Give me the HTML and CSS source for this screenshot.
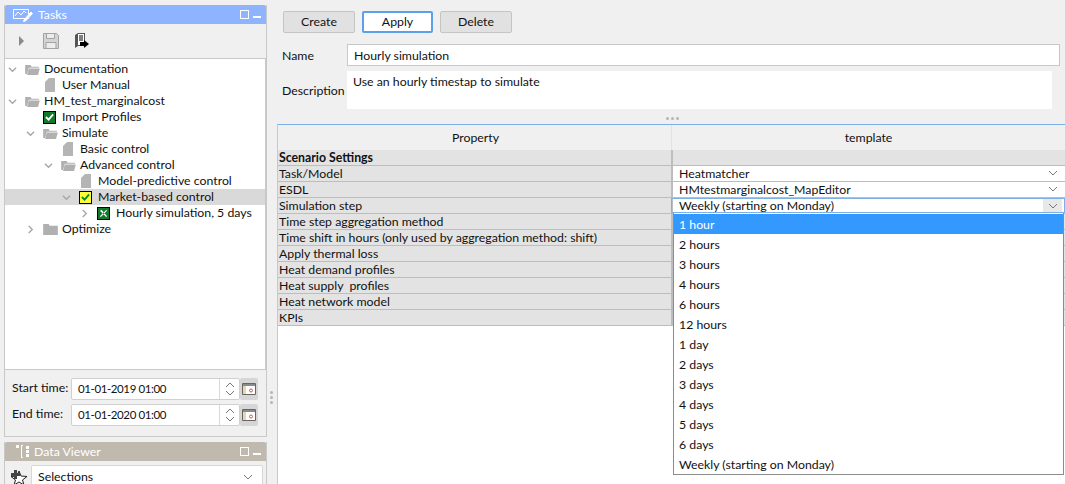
FILE: index.html
```html
<!DOCTYPE html>
<html lang="en">

<head>
    <meta charset="UTF-8">
    <title>Tasks</title>
    <link rel="stylesheet" href="styles.css">
</head>

<body>
    <div class="sidebar">
        <!-- Tasks panel -->
        <section class="panel tasks-panel">
            <div class="panel-title title-active">
                <svg class="title-icon" width="20" height="14" viewBox="0 0 20 14" fill="none" stroke="#fff" stroke-width="1">
                    <path d="M.5 1.500h15v9H.5zM2 8l3-4 3 3 3-4 2 2" />
                    <path d="M11 12l7-8 1.500 1.500-7 7.500-2 .5z" fill="#fff" />
                </svg>
                <span>Tasks</span>
                <span class="win-buttons"><i class="win-max"></i><i class="win-min"></i></span>
            </div>
            <div class="toolbar">
                <svg width="6" height="10" viewBox="0 0 6 10"><path d="M0 0l5 5-5 5z" fill="#8a8a8a" /></svg>
                <svg width="16" height="16" viewBox="0 0 16 16" fill="#d4d4d4" stroke="#a3a3a3"><path d="M.5.5h13l2 2v13H.5z" /><path d="M3.500.5h8v5h-8zM3 9.500h10v6H3z" fill="#ececec" /></svg>
                <svg width="16" height="16" viewBox="0 0 16 16"><path d="M1 2l3-2h7v13H4l-3 2z" fill="#555" /><path d="M4 1h6v11H4z" fill="#fff" /><path d="M5 3h4M5 5h4M5 7h4" stroke="#000" /><path d="M6 9h4V7l5 4-5 4v-2H6z" fill="#000" /></svg>
            </div>
            <ul class="tree">
                <li class="tree-row level-0"><svg class="chevron" viewBox="0 0 10 6"><path d="M1 1l4 4 4-4" /></svg><svg class="folder" viewBox="0 0 16 12"><path d="M0 1h6l1 2h8v1H4L2 11H0z" /><path d="M4 5h12l-2 7H2z" /></svg>Documentation</li>
                <li class="tree-row level-1"><span class="chevron"></span><svg class="doc" viewBox="0 0 10 14"><path d="M4 0h6v14H0V4z" /></svg>User Manual</li>
                <li class="tree-row level-0"><svg class="chevron" viewBox="0 0 10 6"><path d="M1 1l4 4 4-4" /></svg><svg class="folder" viewBox="0 0 16 12"><path d="M0 1h6l1 2h8v1H4L2 11H0z" /><path d="M4 5h12l-2 7H2z" /></svg>HM_test_marginalcost</li>
                <li class="tree-row level-1"><span class="chevron"></span><span class="status status-done"><svg viewBox="0 0 10 8"><path d="M1 4l3 3 5-6" /></svg></span>Import Profiles</li>
                <li class="tree-row level-1"><svg class="chevron" viewBox="0 0 10 6"><path d="M1 1l4 4 4-4" /></svg><svg class="folder" viewBox="0 0 16 12"><path d="M0 1h6l1 2h8v1H4L2 11H0z" /><path d="M4 5h12l-2 7H2z" /></svg>Simulate</li>
                <li class="tree-row level-2"><span class="chevron"></span><svg class="doc" viewBox="0 0 10 14"><path d="M4 0h6v14H0V4z" /></svg>Basic control</li>
                <li class="tree-row level-2"><svg class="chevron" viewBox="0 0 10 6"><path d="M1 1l4 4 4-4" /></svg><svg class="folder" viewBox="0 0 16 12"><path d="M0 1h6l1 2h8v1H4L2 11H0z" /><path d="M4 5h12l-2 7H2z" /></svg>Advanced control</li>
                <li class="tree-row level-3"><span class="chevron"></span><svg class="doc" viewBox="0 0 10 14"><path d="M4 0h6v14H0V4z" /></svg>Model-predictive control</li>
                <li class="tree-row level-3 selected"><svg class="chevron" viewBox="0 0 10 6"><path d="M1 1l4 4 4-4" /></svg><span class="status status-active"><svg viewBox="0 0 10 8"><path d="M1 4l3 3 5-6" /></svg></span>Market-based control</li>
                <li class="tree-row level-4"><svg class="chevron" viewBox="0 0 10 10"><path d="M3 1l4 4-4 4" /></svg><span class="status status-tool"><svg viewBox="0 0 10 10"><path d="M1 2l2-1 6 7-1 1zM9 2L8 1 1 8l1 1z" /></svg></span>Hourly simulation, 5 days</li>
                <li class="tree-row level-1"><svg class="chevron" viewBox="0 0 10 10"><path d="M3 1l4 4-4 4" /></svg><svg class="folder" viewBox="0 0 16 12"><path d="M0 0h6l1 2h9v10H0z" /></svg>Optimize</li>
            </ul>
            <div class="time-fields">
                <div class="time-row">
                    <label>Start time:</label>
                    <div class="time-input">
                        <span>01-01-2019 01:00</span>
                        <svg class="spinner" width="12" height="14" viewBox="0 0 12 14"><path d="M2 5l4-4 4 4M2 9l4 4 4-4" /></svg>
                    </div>
                    <div class="calendar"><svg width="14" height="12" viewBox="0 0 14 12"><path d="M.5.5h13v11H.5z" fill="#fff" stroke="#666" /><path d="M1 1h12v2H1z" fill="#8a8a8a" /><path d="M1 3h3v8H1z" fill="#e6d9a8" /><circle cx="9" cy="7.500" r="1.500" fill="none" stroke="#d9534f" /></svg></div>
                </div>
                <div class="time-row">
                    <label>End time:</label>
                    <div class="time-input">
                        <span>01-01-2020 01:00</span>
                        <svg class="spinner" width="12" height="14" viewBox="0 0 12 14"><path d="M2 5l4-4 4 4M2 9l4 4 4-4" /></svg>
                    </div>
                    <div class="calendar"><svg width="14" height="12" viewBox="0 0 14 12"><path d="M.5.5h13v11H.5z" fill="#fff" stroke="#666" /><path d="M1 1h12v2H1z" fill="#8a8a8a" /><path d="M1 3h3v8H1z" fill="#e6d9a8" /><circle cx="9" cy="7.500" r="1.500" fill="none" stroke="#d9534f" /></svg></div>
                </div>
            </div>
        </section>

        <!-- Data viewer panel -->
        <section class="panel viewer-panel">
            <div class="panel-title title-idle">
                <svg class="title-icon" width="14" height="13" viewBox="0 0 14 13" fill="#fff"><path d="M0 0h3v3H0zM5 0h2v1H6v11h1v1H5zM10 1h3v3h-3zM10 5h3v3h-3zM10 9h3v3h-3z" /></svg>
                <span>Data Viewer</span>
                <span class="win-buttons"><i class="win-max"></i><i class="win-min"></i></span>
            </div>
            <div class="viewer-bar">
                <svg width="18" height="18" viewBox="0 0 18 18"><path d="M9 3l2 5 6 .5-4.500 3.500 1.500 5-5-3-5 3 1.500-5L1 8.500 7 8z" fill="#fff" stroke="#222" /><path d="M1 5h3V2h3v3h3v3H7v3H4V8H1z" fill="#444" /></svg>
                <div class="viewer-select">Selections
                    <svg class="caret" viewBox="0 0 10 6"><path d="M1 1l4 4 4-4" /></svg>
                </div>
            </div>
        </section>
    </div>

    <div class="sash"><i></i><i></i><i></i></div>

    <main class="content">
        <div class="actions">
            <button type="button">Create</button>
            <button type="button" class="focused">Apply</button>
            <button type="button">Delete</button>
        </div>

        <div class="form-line name-line">
            <label>Name</label>
            <div class="name-input">Hourly simulation</div>
        </div>
        <div class="form-line desc-line">
            <label>Description</label>
            <div class="desc-input">Use an hourly timestap to simulate</div>
        </div>

        <div class="hsash"><i></i><i></i><i></i></div>

        <div class="property-table">
            <div class="table-head">
                <div class="col-name">Property</div>
                <div class="col-value">template</div>
            </div>
            <div class="row row-group"><div class="col-name">Scenario Settings</div><div class="col-value"></div></div>
            <div class="row"><div class="col-name">Task/Model</div><div class="col-value cell-select">Heatmatcher<svg class="caret" viewBox="0 0 10 6"><path d="M1 1l4 4 4-4" /></svg></div></div>
            <div class="row"><div class="col-name">ESDL</div><div class="col-value cell-select">HMtestmarginalcost_MapEditor<svg class="caret" viewBox="0 0 10 6"><path d="M1 1l4 4 4-4" /></svg></div></div>
            <div class="row"><div class="col-name">Simulation step</div><div class="col-value cell-select cell-open">Weekly (starting on Monday)<span class="caret-box"><svg class="caret" viewBox="0 0 10 6"><path d="M1 1l4 4 4-4" /></svg></span></div></div>
            <div class="row"><div class="col-name">Time step aggregation method</div><div class="col-value"></div></div>
            <div class="row"><div class="col-name">Time shift in hours (only used by aggregation method: shift)</div><div class="col-value"></div></div>
            <div class="row"><div class="col-name">Apply thermal loss</div><div class="col-value"></div></div>
            <div class="row"><div class="col-name">Heat demand profiles</div><div class="col-value"></div></div>
            <div class="row"><div class="col-name">Heat supply&nbsp; profiles</div><div class="col-value"></div></div>
            <div class="row"><div class="col-name">Heat network model</div><div class="col-value"></div></div>
            <div class="row"><div class="col-name">KPIs</div><div class="col-value"></div></div>

            <ul class="dropdown">
                <li class="highlight">1 hour</li>
                <li>2 hours</li>
                <li>3 hours</li>
                <li>4 hours</li>
                <li>6 hours</li>
                <li>12 hours</li>
                <li>1 day</li>
                <li>2 days</li>
                <li>3 days</li>
                <li>4 days</li>
                <li>5 days</li>
                <li>6 days</li>
                <li>Weekly (starting on Monday)</li>
            </ul>
        </div>
    </main>
</body>

</html>
```

FILE: styles.css
```css
* {
    box-sizing: border-box;
}

html, body {
    height: 100%;
}

body {
    margin: 0;
    background-color: #f0f0f0;
    color: #111;
    font-family: Lato, "Noto Sans", sans-serif;
    font-size: 12.300px;
    line-height: 16px;
    display: flex;
    height: 484px;
    overflow: hidden;
}

/* left column */
.sidebar {
    width: 263px;
    margin-left: 4px;
    padding-top: 5px;
    flex: none;
}

.panel {
    border-left: 1px solid #c8c8c8;
    border-right: 1px solid #c8c8c8;
}

.tasks-panel {
    height: 432px;
    border-bottom: 1px solid #c8c8c8;
    display: flex;
    flex-direction: column;
}

.viewer-panel {
    margin-top: 5px;
}

.panel-title {
    display: flex;
    align-items: center;
    color: #fff;
    border-radius: 2px 2px 0 0;
    padding-left: 8px;
    flex: none;
}

.title-active {
    height: 19px;
    background-color: #8fb4ff;
}

.title-idle {
    height: 19px;
    background-color: #bfb9ae;
    padding-left: 11px;
}

.title-icon {
    margin-right: 5px;
}

.title-idle .title-icon {
    margin-right: 4px;
}

.win-buttons {
    margin-left: auto;
    display: flex;
    align-items: center;
    gap: 4px;
    padding-right: 5px;
}

.win-max {
    width: 9px;
    height: 9px;
    border: 1px solid #fff;
}

.win-min {
    width: 8px;
    height: 2px;
    margin-top: 5px;
    background-color: #fff;
}

.toolbar {
    height: 34px;
    display: flex;
    align-items: center;
    gap: 19px;
    padding-left: 14px;
    flex: none;
}

.toolbar svg:first-child {
    margin-right: -1px;
}

.toolbar svg:last-child {
    margin-left: -4px;
}

.tree {
    list-style: none;
    margin: 0;
    padding: 2px 0 0;
    height: 312px;
    background-color: #fff;
    border: 1px solid #c8c8c8;
    border-width: 1px 1px 1px 0;
    flex: none;
}

.tree-row {
    height: 16px;
    display: flex;
    align-items: center;
    white-space: nowrap;
}

.level-0 { padding-left: 3px; }
.level-1 { padding-left: 21px; }
.level-2 { padding-left: 39px; }
.level-3 { padding-left: 57px; }
.level-4 { padding-left: 75px; }

.selected {
    background-color: #d9d9d9;
}

.chevron {
    width: 9px;
    height: 9px;
    flex: none;
    margin-right: 8px;
    fill: none;
    stroke: #a6a6a6;
    stroke-width: 1.500;
}

.folder {
    width: 15px;
    height: 11px;
    flex: none;
    margin-right: 4px;
    fill: #b0b0b0;
}

.doc {
    width: 10px;
    height: 14px;
    flex: none;
    margin: 0 7px 0 2px;
    fill: #b5b5b5;
}

.status {
    width: 13px;
    height: 13px;
    flex: none;
    margin-right: 6px;
    border: 1px solid #000;
    display: flex;
    align-items: center;
    justify-content: center;
}

.status svg {
    width: 9px;
    height: 8px;
    fill: none;
    stroke-width: 2;
}

.status-done {
    background-color: #0f7a2a;
    stroke: #fff;
}

.status-active {
    background-color: #ffff33;
    stroke: #0f8a2a;
}

.status-tool {
    background-color: #0f7a2a;
}

.status-tool svg {
    fill: #fff;
    height: 9px;
    stroke-width: 0;
}

.time-fields {
    padding: 8px 0 0 7px;
}

.time-row {
    display: flex;
    align-items: center;
    height: 22px;
    margin-bottom: 4px;
}

.time-row label {
    width: 59px;
    flex: none;
    margin-top: -2px;
}

.time-input {
    width: 169px;
    height: 22px;
    background-color: #fff;
    border: 1px solid #d0d0d0;
    border-radius: 2px;
    display: flex;
    align-items: center;
    padding-left: 6px;
    position: relative;
}

.time-input span {
    flex: 1;
    font-size: 11.500px;
    letter-spacing: -0.400px;
}

.spinner {
    fill: none;
    stroke: #777;
    margin-right: 3px;
    margin-left: 5px;
}

.time-input::after {
    content: "";
    position: absolute;
    right: 19px;
    top: 0;
    bottom: 0;
    border-left: 1px solid #d8d8d8;
}

.calendar {
    width: 18px;
    height: 22px;
    background-color: #d6d6d6;
    border-radius: 2px;
    display: flex;
    align-items: center;
    justify-content: center;
    flex: none;
}

.viewer-bar {
    display: flex;
    align-items: center;
    height: 23px;
    margin-top: 4px;
    padding: 0 3px 0 5px;
    gap: 3px;
}

.viewer-select {
    flex: 1;
    height: 23px;
    background-color: #fff;
    border: 1px solid #d8d8d8;
    border-radius: 2px 2px 0 0;
    padding: 3px 6px 0;
    display: flex;
    justify-content: space-between;
}

.caret {
    width: 10px;
    height: 6px;
    flex: none;
    fill: none;
    stroke: #777;
    margin-top: 5px;
    margin-right: 3px;
}

/* sash between the columns */
.sash {
    width: 6px;
    flex: none;
    display: flex;
    flex-direction: column;
    align-items: flex-start;
    justify-content: flex-start;
    gap: 2px;
    padding: 391px 0 0 3px;
}

.sash i, .hsash i {
    width: 3px;
    height: 3px;
    border-radius: 50%;
    background-color: #b5b5b5;
}

/* right column */
.content {
    flex: 1;
    min-width: 0;
    display: flex;
    flex-direction: column;
}

.actions {
    display: flex;
    gap: 7px;
    margin: 11px 0 0 10px;
    flex: none;
}

button {
    width: 72px;
    height: 22px;
    padding: 0;
    font: inherit;
    color: inherit;
    background-color: #e1e1e1;
    border: 1px solid #c4c4c4;
    border-radius: 2px;
}

button.focused {
    width: 71px;
    background-color: #fff;
    border: 2px solid #5aa0ea;
}

.form-line {
    display: flex;
    flex: none;
}

.form-line label {
    width: 74px;
    flex: none;
    padding: 1px 0 0 9px;
}

.name-line {
    margin-top: 11px;
    height: 22px;
    align-items: center;
}

.name-input {
    width: 713px;
    height: 22px;
    background-color: #fff;
    border: 1px solid #c8c8c8;
    padding: 3px 6px;
}

.desc-line {
    margin-top: 5px;
    height: 38px;
    align-items: center;
}

.desc-input {
    width: 705px;
    height: 38px;
    background-color: #fff;
    padding: 3px 6px;
}

.hsash {
    height: 15px;
    display: flex;
    justify-content: center;
    align-items: center;
    gap: 2px;
    padding: 3px 0 0 6px;
    flex: none;
}

.property-table {
    flex: 1;
    margin-left: 4px;
    background-color: #fff;
    border: 1px solid #c8c8c8;
    border-top-color: #7fb0e4;
    border-right: 0;
    border-bottom: 0;
    position: relative;
}

.table-head {
    display: flex;
    height: 25px;
    background-color: #f0f0f0;
    text-align: center;
    line-height: 25px;
}

.table-head .col-value {
    border-left: 1px solid #e3e3e3;
}

.row {
    display: flex;
    height: 16px;
    background-color: #e3e3e3;
    border-bottom: 1px solid #bdbdbd;
    line-height: 15px;
}

.row-group {
    font-weight: 700;
}

.col-name {
    width: 393px;
    flex: none;
    padding-left: 1px;
    white-space: nowrap;
}

.table-head .col-name {
    padding-left: 2px;
}

.col-value {
    flex: 1;
}

.row .col-value {
    border-left: 2px solid #bdbdbd;
}

.cell-select {
    background-color: #fff;
    padding: 0 4px 0 6px;
    display: flex;
    justify-content: space-between;
}

.cell-select .caret {
    margin-top: 4px;
}

.cell-open {
    outline: 1px solid #7fb0e4;
    outline-offset: -1px;
    padding-right: 3px;
}

.caret-box {
    width: 19px;
    background-color: #e8e8e8;
    margin: 1px 0;
    padding-left: 5px;
}

.caret-box .caret {
    display: block;
    margin-top: 4px;
    margin-right: 0;
}

.dropdown {
    list-style: none;
    margin: 0;
    padding: 1px 0 0;
    position: absolute;
    left: 395px;
    right: 1px;
    top: 88px;
    height: 262px;
    background-color: #fff;
    border: 1px solid #8c8c8c;
    border-top: 0;
}

.dropdown li {
    height: 20px;
    line-height: 22px;
    padding-left: 5px;
}

.dropdown .highlight {
    background-color: #3399ff;
    color: #fff;
}
```
